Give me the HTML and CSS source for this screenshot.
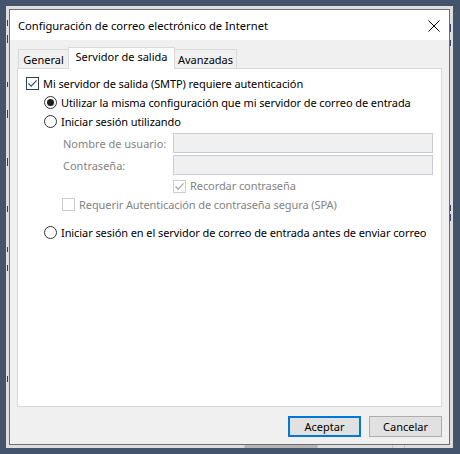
FILE: index.html
```html
<!DOCTYPE html>
<html lang="es">
<head>
<meta charset="utf-8">
<title>Configuración de correo electrónico de Internet</title>
<link rel="stylesheet" href="styles.css">
</head>
<body>
  <!-- window behind the dialog -->
  <div class="backwin">
    <div class="back-side back-left">
      <i style="top:14px;height:6px"></i>
      <i style="top:29px;height:8px"></i>
      <i style="top:76px;height:5px"></i>
      <i style="top:104px;height:8px"></i>
      <i style="top:152px;height:8px"></i>
      <i style="top:200px;height:6px"></i>
      <i style="top:241px;height:5px"></i>
      <i style="top:259px;height:6px"></i>
      <i style="top:370px;height:6px"></i>
    </div>
    <div class="back-side back-right">
      <i style="top:18px;height:8px"></i>
      <i style="top:34px;height:6px"></i>
      <i style="top:199px;height:6px"></i>
      <i style="top:208px;height:7px"></i>
    </div>
    <div class="back-bottom">
      <span class="cell c1"></span>
      <span class="cell c2"></span>
      <span class="cell c3"></span>
      <span class="cell c4"></span>
      <span class="cell c5"></span>
    </div>
  </div>

  <div class="dialog">
    <div class="titlebar">
      <span class="title">Configuración de correo electrónico de Internet</span>
      <svg class="close" width="12" height="12" viewBox="0 0 12 12">
        <path d="M0.5 0.5 L11.5 11.5 M11.5 0.5 L0.5 11.5" stroke="#000" stroke-width="1" fill="none"/>
      </svg>
    </div>

    <div class="content">
      <div class="tabs">
        <div class="tab tab-general">General</div>
        <div class="tab tab-active">Servidor de salida</div>
        <div class="tab tab-adv">Avanzadas</div>
      </div>

      <div class="panel">
        <div class="row">
          <span class="check checked">
            <svg width="11" height="11" viewBox="0 0 11 11"><path d="M1.5 5.5 L4.2 8.2 L9.6 2.4" stroke="#2a4a78" stroke-width="1.1" fill="none"/></svg>
          </span>
          <span class="label">Mi servidor de salida (SMTP) requiere autenticación</span>
        </div>

        <div class="row indent-radio">
          <span class="radio selected"><span class="dot"></span></span>
          <span class="label">Utilizar la misma configuración que mi servidor de correo de entrada</span>
        </div>

        <div class="row indent-radio">
          <span class="radio"></span>
          <span class="label">Iniciar sesión utilizando</span>
        </div>

        <div class="field-row first">
          <span class="field-label">Nombre de usuario:</span>
          <span class="input"></span>
        </div>

        <div class="field-row">
          <span class="field-label">Contraseña:</span>
          <span class="input"></span>
        </div>

        <div class="row short indent-remember">
          <span class="check disabled">
            <svg width="11" height="11" viewBox="0 0 11 11"><path d="M1.5 5.5 L4.2 8.2 L9.6 2.4" stroke="#a0a0a0" stroke-width="1.1" fill="none"/></svg>
          </span>
          <span class="label muted">Recordar contraseña</span>
        </div>

        <div class="row indent-spa">
          <span class="check disabled"></span>
          <span class="label muted">Requerir Autenticación de contraseña segura (SPA)</span>
        </div>

        <div class="row indent-radio gap-top">
          <span class="radio"></span>
          <span class="label">Iniciar sesión en el servidor de correo de entrada antes de enviar correo</span>
        </div>
      </div>

      <div class="buttons">
        <button class="btn btn-default" type="button">Aceptar</button>
        <button class="btn" type="button">Cancelar</button>
      </div>
    </div>
  </div>
</body>
</html>
```
FILE: styles.css
```css
* {
  box-sizing: border-box;
}

html,
body {
  margin: 0;
  padding: 0;
}

body {
  width: 460px;
  height: 454px;
  position: relative;
  overflow: hidden;
  background: #44546c;
  font-family: "Noto Sans", "Open Sans", sans-serif;
  font-size: 11px;
  color: #000;
}

/* ---------- window behind ---------- */
.backwin {
  position: absolute;
  left: 6px;
  top: 6px;
  width: 447px;
  height: 442px;
  background: #dedede;
}

.back-side {
  position: absolute;
  top: 0;
  bottom: 0;
  width: 3px;
}

.back-left {
  left: 0;
}

.back-right {
  right: 0;
}

/* partial glyph strokes of text hidden behind the dialog */
.back-side i {
  position: absolute;
  left: 1px;
  width: 1px;
  background: #3a3a3a;
}

.back-right i {
  left: 0;
  background: #3b4270;
}

.back-bottom {
  position: absolute;
  left: 0;
  right: 0;
  bottom: 0;
  height: 4px;
  display: flex;
}

.cell {
  height: 100%;
  border-right: 1px solid #c4c4c4;
}

.c1 { width: 239px; }
.c2 { width: 73px; background: #b4b4b4; }
.c3 { width: 75px; }
.c4 { width: 12px; }
.c5 { flex: 1; border-right: 0; }

/* ---------- dialog ---------- */
.dialog {
  position: absolute;
  left: 9px;
  top: 9px;
  width: 441px;
  height: 436px;
  border: 1px solid #6e6e6e;
  background: #f0f0f0;
  display: flex;
  flex-direction: column;
}

.titlebar {
  height: 30px;
  background: #fff;
  display: flex;
  align-items: center;
  justify-content: space-between;
  padding: 0 9px 0 8px;
  flex: none;
}

.title {
  font-size: 11.2px;
  line-height: 16px;
  padding-top: 1px;
}

.close {
  display: block;
  margin-top: 1px;
}

.content {
  flex: 1;
  display: flex;
  flex-direction: column;
  padding: 7px 7px 7px 7px;
}

/* ---------- tabs ---------- */
.tabs {
  display: flex;
  align-items: flex-end;
  height: 21px;
  padding-left: 1px;
  position: relative;
  z-index: 1;
  flex: none;
}

.tab {
  height: 19px;
  border: 1px solid #d9d9d9;
  border-bottom: 0;
  background: #f0f0f0;
  text-align: center;
  line-height: 19px;
  white-space: nowrap;
}

.tab-general {
  width: 50px;
  border-right: 0;
}

.tab-active {
  height: 22px;
  width: 107px;
  background: #fff;
  margin-bottom: -1px;
  line-height: 18px;
}

.tab-adv {
  width: 62px;
  border-left: 0;
}

/* ---------- panel ---------- */
.panel {
  flex: 1;
  background: #fff;
  border: 1px solid #d9d9d9;
  padding: 5px 8px 0 8px;
}

.row {
  display: flex;
  align-items: center;
  height: 19px;
  white-space: nowrap;
}

.row.short {
  height: 18px;
}

.indent-radio {
  padding-left: 18px;
}

.indent-remember {
  padding-left: 147px;
  margin-top: 2px;
}

.indent-spa {
  padding-left: 36px;
}

.gap-top {
  margin-top: 9px;
}

.label {
  line-height: 16px;
  letter-spacing: -0.08px;
}

.muted {
  color: #838383;
}

.check {
  width: 13px;
  height: 13px;
  border: 1px solid #333;
  background: #fff;
  margin-right: 4px;
  flex: none;
  display: flex;
  align-items: center;
  justify-content: center;
}

.check svg {
  display: block;
}

.check.checked {
  border-color: #2f3f55;
}

.check.disabled {
  border-color: #cccccc;
}

.radio {
  width: 13px;
  height: 13px;
  border: 1px solid #333;
  border-radius: 50%;
  background: #fff;
  margin-right: 4px;
  flex: none;
  display: flex;
  align-items: center;
  justify-content: center;
}

.dot {
  width: 7px;
  height: 7px;
  border-radius: 50%;
  background: #1f1f1f;
}

.field-row {
  display: flex;
  align-items: center;
  height: 20px;
  margin-top: 2px;
  padding-left: 37px;
}

.field-label {
  width: 110px;
  flex: none;
  color: #838383;
  white-space: nowrap;
}

.input {
  width: 260px;
  height: 20px;
  border: 1px solid #c8cdd5;
  background: #f0f0f0;
}

/* ---------- buttons ---------- */
.buttons {
  display: flex;
  justify-content: flex-end;
  gap: 8px;
  margin-top: 9px;
  padding-right: 0;
  flex: none;
}

.btn {
  width: 73px;
  height: 21px;
  margin: 0;
  padding: 0;
  border: 1px solid #adadad;
  background: #e1e1e1;
  font-family: inherit;
  font-size: 11px;
  color: #000;
  line-height: 17px;
}

.btn-default {
  border: 2px solid #0078d7;
}
```
